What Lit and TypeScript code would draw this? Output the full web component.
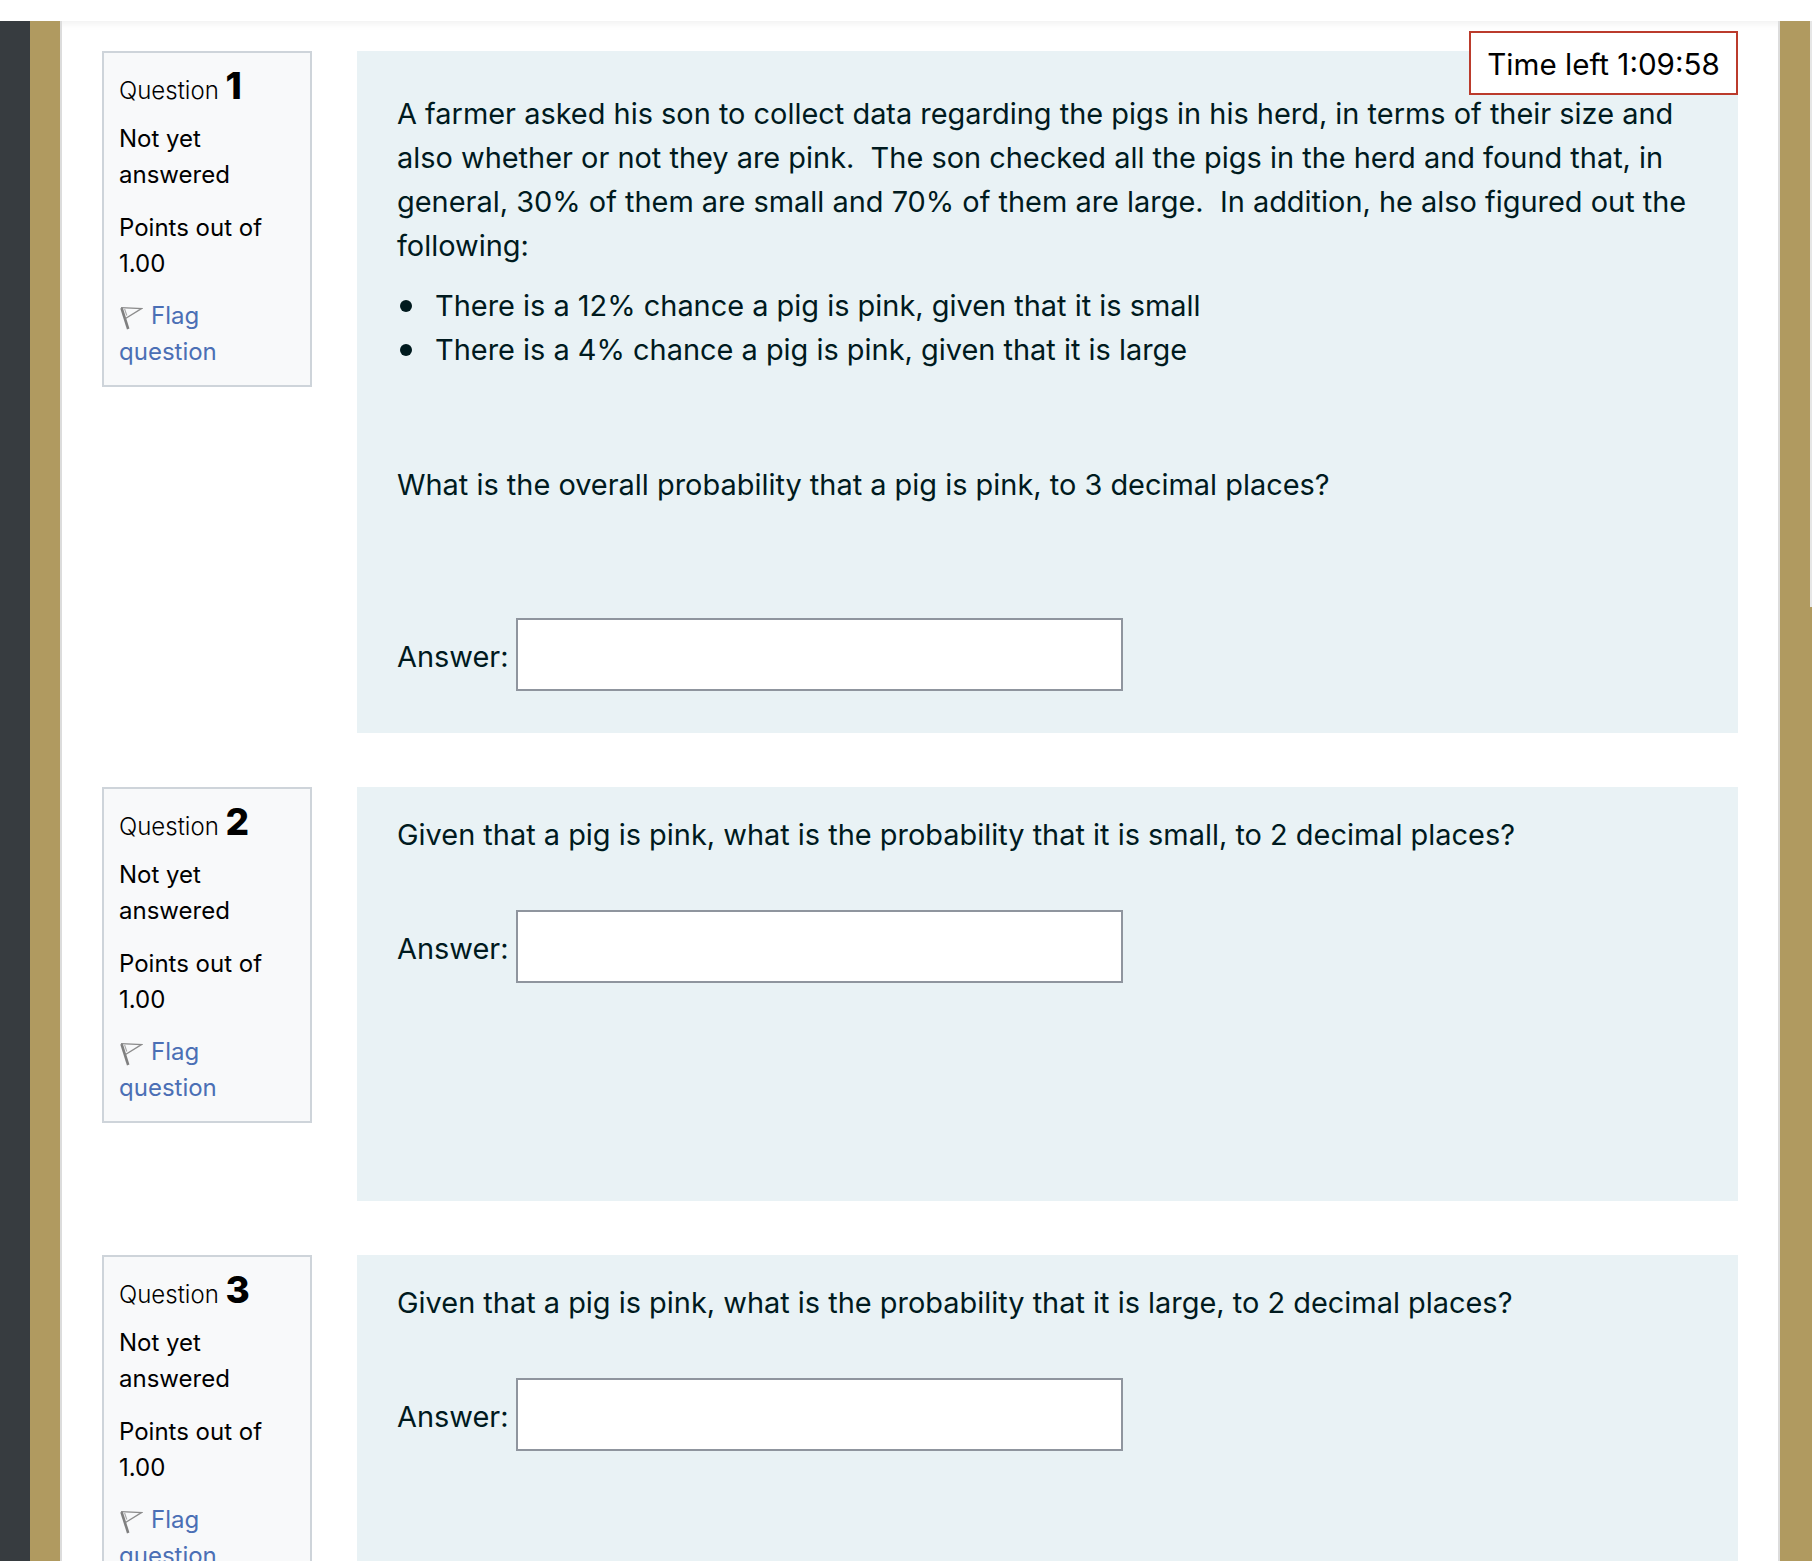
import { LitElement, html, css } from "lit";
import { customElement } from "lit/decorators.js";

const flag = html`<svg class="flag" width="24" height="24" viewBox="0 0 24 24" aria-hidden="true"><path d="M2.5 2 L9.2 23" stroke="#7f7f7f" stroke-width="2.6" fill="none"/><path d="M2 1.6 L22.5 2.6 L6.5 12.5" stroke="#8c8c8c" stroke-width="1.4" fill="none"/><path d="M5.6 3 L7.8 9.5" stroke="#a8a8a8" stroke-width="1.1" fill="none"/></svg>`;

@customElement("app-root")
export class AppRoot extends LitElement {
  static styles = css`
    :host { display: block; height: 1561px; overflow: hidden; background: #fff; font-family: Inter, "Liberation Sans", sans-serif; color: #001a1e; }
    .top { height: 21px; background: #fff; }
    .frame { display: flex; height: 1540px; background: linear-gradient(90deg, #373c40 0 30px, #b09a60 30px); position: relative; }
    .page { margin-left: 60px; width: 1720px; box-sizing: border-box; border-left: 2px solid #dcdcdc; border-right: 2px solid #dcdcdc; background: #fff; padding: 30px 40px 0; box-shadow: inset 0 10px 8px -8px rgba(0,0,0,.07); position: relative; }
    .scroll { position: absolute; right: 0; top: 0; width: 2px; height: 586px; background: #e6e6e6; }
    .timer { position: absolute; top: 10px; right: 40px; box-sizing: border-box; width: 269px; height: 64px; border: 2px solid #bb3b2c; background: #fff; color: #000; font-size: 29.6px; padding-top: 2px; display: flex; align-items: center; justify-content: center; }
    .q { display: flex; gap: 45px; margin-bottom: 54px; align-items: flex-start; }
    .info { width: 210px; flex: none; box-sizing: border-box; height: 336px; border: 2px solid #ced4da; background: #f8f9fa; padding: 15px; font-size: 24px; line-height: 36px; color: #000; }
    .qno { font-size: 24px; font-weight: 300; line-height: 40px; margin-bottom: 10.3px; }
    .qno b { font-size: 37px; font-weight: 800; line-height: 36px; }
    .state { margin-bottom: 17px; }
    .grade { margin-bottom: 15.5px; }
    .link { color: #4b6fb5; }
    .flag { vertical-align: -6px; margin-right: 8px; }
    .content { flex: 1; box-sizing: border-box; background: #e9f2f5; padding: 41px 40px 0; font-size: 28.93px; line-height: 44px; }
    .content.short { padding-top: 26px; }
    p { margin: 0; }
    ul { margin: 16px 0 0; padding: 0 0 0 38px; list-style: none; }
    li { position: relative; }
    li::before { content: ""; position: absolute; left: -35px; top: 15.5px; width: 12px; height: 12px; border-radius: 50%; background: #001a1e; }
    .ask { margin-top: 91px; }
    .answer { display: flex; align-items: center; gap: 7px; }
    .answer span { position: relative; top: 2px; }
    .box { width: 607px; height: 73px; box-sizing: border-box; border: 2px solid #8f959e; background: #fff; }
    .a1 { margin-top: 111px; padding-bottom: 42px; }
    .a2 { margin-top: 53px; padding-bottom: 218px; }
  `;

  info(n: number) {
    return html`<div class="info">
      <div class="qno">Question <b>${n}</b></div>
      <div class="state">Not yet answered</div>
      <div class="grade">Points out of 1.00</div>
      <div class="link">${flag}Flag question</div>
    </div>`;
  }

  answer(cls: string) {
    return html`<div class="answer ${cls}"><span>Answer:</span><div class="box"></div></div>`;
  }

  render() {
    return html`<div class="top"></div>
      <div class="frame">
        <div class="page">
          <div class="timer">Time left 1:09:58</div>
          <div class="q">
            ${this.info(1)}
            <div class="content">
              <p>A farmer asked his son to collect data regarding the pigs in his herd, in terms of their size and<br />also whether or not they are pink.&nbsp; The son checked all the pigs in the herd and found that, in<br />general, 30% of them are small and 70% of them are large.&nbsp; In addition, he also figured out the<br />following:</p>
              <ul>
                <li>There is a 12% chance a pig is pink, given that it is small</li>
                <li>There is a 4% chance a pig is pink, given that it is large</li>
              </ul>
              <p class="ask">What is the overall probability that a pig is pink, to 3 decimal places?</p>
              ${this.answer("a1")}
            </div>
          </div>
          <div class="q">
            ${this.info(2)}
            <div class="content short">
              <p>Given that a pig is pink, what is the probability that it is small, to 2 decimal places?</p>
              ${this.answer("a2")}
            </div>
          </div>
          <div class="q">
            ${this.info(3)}
            <div class="content short">
              <p>Given that a pig is pink, what is the probability that it is large, to 2 decimal places?</p>
              ${this.answer("a2")}
            </div>
          </div>
        </div>
        <div class="scroll"></div>
      </div>`;
  }
}
